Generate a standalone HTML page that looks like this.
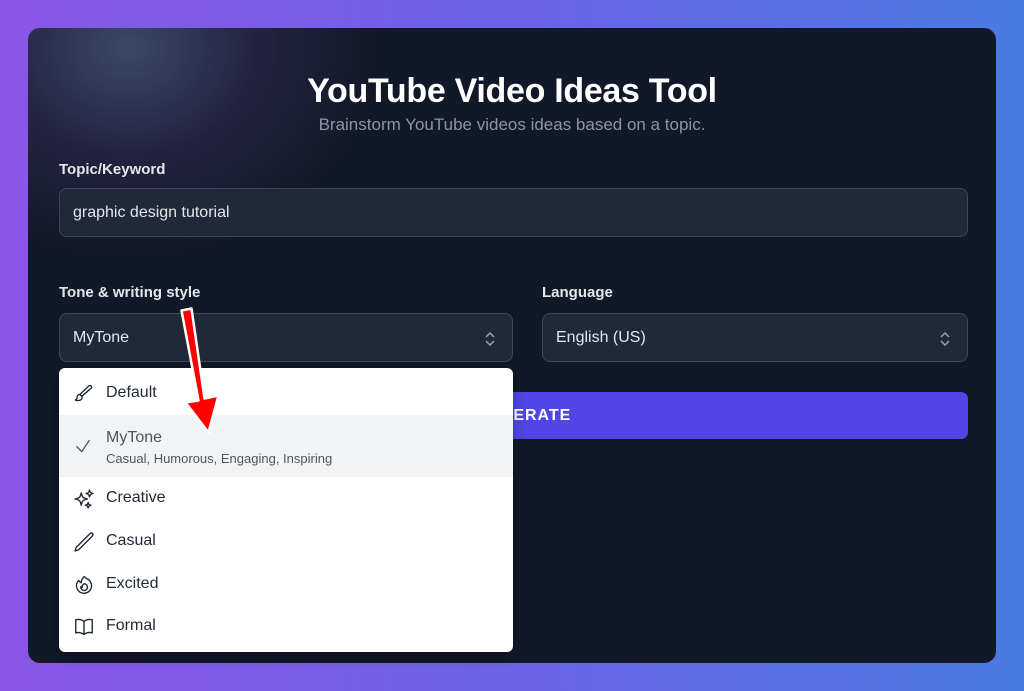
<!DOCTYPE html>
<html><head><meta charset="utf-8"><style>
*{box-sizing:border-box;margin:0;padding:0}
body{width:1024px;height:691px;overflow:hidden;background:linear-gradient(90deg,#8b55e6,#6b63e4 50%,#4a7be2);font-family:"Liberation Sans",sans-serif;position:relative}
.card{position:absolute;left:28px;top:28px;width:968px;height:635px;border-radius:12px;background:#111827;overflow:hidden}
.glow{position:absolute;left:-200px;top:-230px;width:600px;height:500px;border-radius:50%;background:radial-gradient(ellipse at 50% 50%,rgba(75,95,130,.7),rgba(65,50,105,.4) 30%,rgba(17,24,39,0) 60%)}
h1{position:absolute;top:44px;left:0;width:100%;text-align:center;color:#fff;font-size:34px;font-weight:bold;letter-spacing:-0.3px}
.sub{position:absolute;top:87px;left:0;width:100%;text-align:center;color:#8f95a0;font-size:17px}
.lbl{position:absolute;color:#e5e7eb;font-size:15px;font-weight:bold}
.inp{position:absolute;background:#1f2937;border:1px solid #3f4855;border-radius:8px;color:#e5e7eb;font-size:16px;padding-left:13px;display:flex;align-items:center}
.chev{position:absolute;right:16px;top:17px}
.btn{position:absolute;left:31px;top:364px;width:909px;height:47px;background:#4f46e5;border-radius:7px;color:#fff;font-weight:bold;font-size:16px;display:flex;align-items:center;justify-content:center;letter-spacing:1px;padding-left:20px}
.dd{position:absolute;left:59px;top:368px;width:454px;height:284px;background:#fff;border-radius:6px;box-shadow:0 4px 12px rgba(0,0,0,.3)}
.it{position:absolute;left:0;width:100%;color:#1f2937;font-size:16px}
.it span{position:absolute;left:47px}
.it svg{position:absolute;left:14px}
</style></head><body>
<div class="card">
<div class="glow"></div>
<h1>YouTube Video Ideas Tool</h1>
<div class="sub">Brainstorm YouTube videos ideas based on a topic.</div>
<div class="lbl" style="left:31px;top:133px">Topic/Keyword</div>
<div class="inp" style="left:31px;top:160px;width:909px;height:49px">graphic design tutorial</div>
<div class="lbl" style="left:31px;top:256px">Tone &amp; writing style</div>
<div class="inp" style="left:31px;top:285px;width:454px;height:49px">MyTone<svg class="chev" width="12" height="16" viewBox="0 0 12 16" fill="none" stroke="#9ca3af" stroke-width="1.5"><path d="M2 6l4-4 4 4M2 10l4 4 4-4"/></svg></div>
<div class="lbl" style="left:514px;top:256px">Language</div>
<div class="inp" style="left:514px;top:285px;width:426px;height:49px">English (US)<svg class="chev" width="12" height="16" viewBox="0 0 12 16" fill="none" stroke="#9ca3af" stroke-width="1.5"><path d="M2 6l4-4 4 4M2 10l4 4 4-4"/></svg></div>
<div class="btn">GENERATE</div>
</div>
<div class="dd">
<div class="it" style="top:15px"><svg width="22" height="22" viewBox="0 0 24 24" fill="none" stroke="#1f2937" stroke-width="1.5" stroke-linecap="round" stroke-linejoin="round"><path d="M9.5 14.5l-2-2 10-9.5a1.8 1.8 0 012.5 2.5z"/><path d="M7.5 12.5c-2 0-3 1.5-3 3.5 0 1-1 2-2 2.5 2 1 5 1 6.5-.5 1.2-1.2 1-2.8.5-3.5"/></svg><span style="top:1px">Default</span></div>
<div style="position:absolute;left:0;top:47px;width:100%;height:62px;background:#f2f3f5"></div>
<div class="it" style="top:68px"><svg width="20" height="20" viewBox="0 0 24 24" fill="none" stroke="#4b5563" stroke-width="1.5" stroke-linecap="round" stroke-linejoin="round"><path d="M4.5 12.75l6 6 9-13.5"/></svg><span style="top:-7px;color:#4b5563">MyTone</span><span style="top:15px;font-size:13px;color:#4b5563">Casual, Humorous, Engaging, Inspiring</span></div>
<div class="it" style="top:120px"><svg width="22" height="22" viewBox="0 0 24 24" fill="none" stroke="#1f2937" stroke-width="1.5" stroke-linejoin="round"><path d="M9.8 15.9L9 18.75l-.8-2.85a4.5 4.5 0 00-3.1-3.1L2.25 12l2.85-.8a4.5 4.5 0 003.1-3.1L9 5.25l.8 2.85a4.5 4.5 0 003.1 3.1l2.85.8-2.85.8a4.5 4.5 0 00-3.1 3.1zM18.26 8.7L18 9.75l-.26-1.04a3.4 3.4 0 00-2.45-2.45L14.25 6l1.04-.26a3.4 3.4 0 002.45-2.45L18 2.25l.26 1.04a3.4 3.4 0 002.45 2.45L21.75 6l-1.04.26a3.4 3.4 0 00-2.45 2.45zM16.9 20.56L16.5 21.75l-.4-1.19a2.25 2.25 0 00-1.42-1.42l-1.18-.39 1.18-.4a2.25 2.25 0 001.42-1.42l.4-1.18.39 1.18a2.25 2.25 0 001.42 1.42l1.19.4-1.19.39a2.25 2.25 0 00-1.42 1.42z"/></svg><span style="top:1px">Creative</span></div>
<div class="it" style="top:163px"><svg width="22" height="22" viewBox="0 0 24 24" fill="none" stroke="#1f2937" stroke-width="1.5" stroke-linecap="round" stroke-linejoin="round"><path d="M16.86 4.49l1.69-1.69a1.88 1.88 0 112.65 2.65L6.83 19.82a4.5 4.5 0 01-1.9 1.13L2.25 21.75l.8-2.68a4.5 4.5 0 011.13-1.9L16.86 4.49z"/></svg><span style="top:1px">Casual</span></div>
<div class="it" style="top:206px"><svg width="22" height="22" viewBox="0 0 24 24" fill="none" stroke="#1f2937" stroke-width="1.5" stroke-linecap="round" stroke-linejoin="round"><path d="M15.36 5.21A8.25 8.25 0 0112 21 8.25 8.25 0 016.04 7.05 8.3 8.3 0 009 9.6a8.98 8.98 0 013.36-6.87 8.2 8.2 0 003 2.48z"/><path d="M12 18a3.75 3.75 0 00.5-7.47 4.5 4.5 0 00-2.5 4.47 2.7 2.7 0 01-1.5-1.2A3.75 3.75 0 0012 18z"/></svg><span style="top:1px">Excited</span></div>
<div class="it" style="top:248px"><svg width="22" height="22" viewBox="0 0 24 24" fill="none" stroke="#1f2937" stroke-width="1.5" stroke-linejoin="round"><path d="M12 6.04A8.97 8.97 0 0 0 6 3.75c-1.05 0-2.06.18-3 .51v14.25A8.99 8.99 0 0 1 6 18c2.3 0 4.4.87 6 2.29M12 6.04a8.97 8.97 0 0 1 6-2.29c1.05 0 2.06.18 3 .51v14.25A8.99 8.99 0 0 0 18 18a8.97 8.97 0 0 0-6 2.29M12 6.04v14.25"/></svg><span style="top:1px">Formal</span></div>
</div>
<svg style="position:absolute;left:0;top:0" width="1024" height="691"><path d="M181.5 310.5l10-2 13 90 14-3-10 37-23-30 13-2z" fill="#f00" stroke="#fff" stroke-width="2.5" stroke-linejoin="round"/></svg>
</body></html>
